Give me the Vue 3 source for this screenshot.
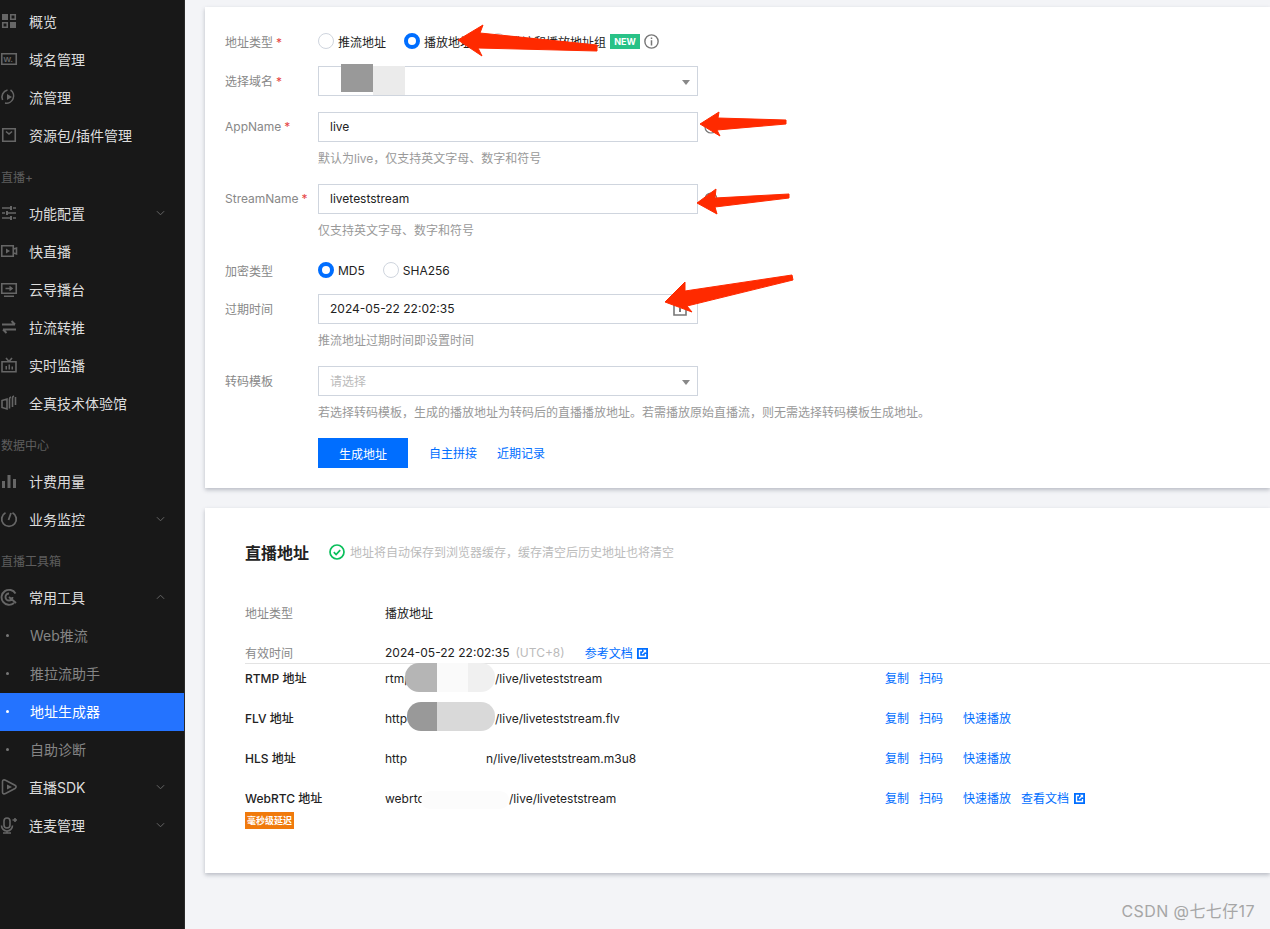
<template>
  <div class="page">
    <aside class="sidebar">
      <template v-for="m in menu" :key="m.label">
        <div v-if="m.section" class="section">{{ m.label }}</div>
        <div v-else-if="m.sub" class="sub" :class="{ active: m.active }">
          <i class="dot"></i>{{ m.label }}
        </div>
        <div v-else class="item">
          <svg class="icon" viewBox="0 0 18 18">
            <path v-if="icons[m.icon].s" :d="icons[m.icon].s" fill="none" stroke="#666" :stroke-width="icons[m.icon].w || 1.6" />
            <path v-if="icons[m.icon].f" :d="icons[m.icon].f" fill="#666" />
            <text v-if="icons[m.icon].t" x="3.4" y="12" class="icon-text">{{ icons[m.icon].t }}</text>
          </svg>
          <span>{{ m.label }}</span>
          <svg v-if="m.arrow" class="chev" viewBox="0 0 10 6">
            <path :d="m.arrow === 'up' ? 'M1 5l4-4 4 4' : 'M1 1l4 4 4-4'" fill="none" stroke="#666" stroke-width="1.1" />
          </svg>
        </div>
      </template>
    </aside>

    <main class="main">
      <section class="card form-card">
        <div class="row row-type">
          <label class="label">地址类型<em>*</em></label>
          <div class="radios">
            <span class="radio"><i class="circle"></i>推流地址</span>
            <span class="radio"><i class="circle on"></i>播放地址</span>
            <span class="radio"><i class="circle"></i>推流和播放地址组</span>
            <span class="new">NEW</span>
            <svg class="info" viewBox="0 0 14 14">
              <circle cx="7" cy="7" r="6.200" fill="none" stroke="#777" stroke-width="1.300" />
              <path d="M6.300 3.200h1.400v1.400H6.300zM6.300 5.800h1.400v5H6.300z" fill="#777" />
            </svg>
          </div>
        </div>

        <div class="row">
          <label class="label">选择域名<em>*</em></label>
          <div class="field select">
            <span class="redact-a"></span>
            <span class="redact-b"></span>
            <i class="caret"></i>
          </div>
        </div>

        <div class="row">
          <label class="label">AppName<em>*</em></label>
          <div class="field-wrap">
            <div class="field">live</div>
            <svg class="help" viewBox="0 0 14 14"><circle cx="7" cy="7" r="6" fill="none" stroke="#777" stroke-width="1.200" /></svg>
          </div>
        </div>
        <p class="hint">默认为live，仅支持英文字母、数字和符号</p>

        <div class="row">
          <label class="label">StreamName<em>*</em></label>
          <div class="field-wrap">
            <div class="field">liveteststream</div>
            <svg class="help" viewBox="0 0 14 14"><circle cx="7" cy="7" r="6" fill="none" stroke="#777" stroke-width="1.200" /></svg>
          </div>
        </div>
        <p class="hint">仅支持英文字母、数字和符号</p>

        <div class="row row-enc">
          <label class="label">加密类型</label>
          <div class="radios">
            <span class="radio"><i class="circle on"></i>MD5</span>
            <span class="radio"><i class="circle"></i>SHA256</span>
          </div>
        </div>

        <div class="row">
          <label class="label">过期时间</label>
          <div class="field date">
            2024-05-22 22:02:35
            <svg class="calendar" viewBox="0 0 14 14">
              <path d="M1 2.500h12v10.500H1z" fill="none" stroke="#777" stroke-width="1.600" />
              <path d="M6 6h2v4H6z" fill="#777" />
            </svg>
          </div>
        </div>
        <p class="hint">推流地址过期时间即设置时间</p>

        <div class="row">
          <label class="label">转码模板</label>
          <div class="field select placeholder">请选择<i class="caret"></i></div>
        </div>
        <p class="hint">若选择转码模板，生成的播放地址为转码后的直播播放地址。若需播放原始直播流，则无需选择转码模板生成地址。</p>

        <div class="actions">
          <button class="primary">生成地址</button>
          <a class="link">自主拼接</a>
          <a class="link">近期记录</a>
        </div>
      </section>

      <section class="card result-card">
        <div class="title-row">
          <h2>直播地址</h2>
          <svg class="ok" viewBox="0 0 16 16">
            <circle cx="8" cy="8" r="7" fill="none" stroke="#0abf5b" stroke-width="1.700" />
            <path d="M4.800 8.200l2.300 2.300 4.100-4.300" fill="none" stroke="#0abf5b" stroke-width="1.700" />
          </svg>
          <span class="note">地址将自动保存到浏览器缓存，缓存清空后历史地址也将清空</span>
        </div>

        <div class="info-row">
          <span class="info-label">地址类型</span>
          <span>播放地址</span>
        </div>
        <div class="info-row last">
          <span class="info-label">有效时间</span>
          <span>2024-05-22 22:02:35</span>
          <span class="utc">(UTC+8)</span>
          <a class="link doc">参考文档<svg class="ext" viewBox="0 0 12 12"><use href="#ext-icon" /></svg></a>
        </div>

        <div v-for="r in rows" :key="r.name" class="url-row">
          <div class="url-name">
            {{ r.name }}
            <span v-if="r.badge" class="badge">{{ r.badge }}</span>
          </div>
          <div class="url-value">
            <span class="head" :class="r.key">{{ r.head }}</span>
            <span class="mask" :class="r.key"></span>
            <span>{{ r.tail }}</span>
          </div>
          <div class="ops">
            <a class="link">复制</a>
            <a class="link">扫码</a>
            <a v-if="r.play" class="link play">快速播放</a>
            <a v-if="r.doc" class="link">查看文档<svg class="ext" viewBox="0 0 12 12"><use href="#ext-icon" /></svg></a>
          </div>
        </div>
      </section>
    </main>

    <!-- red annotation arrows drawn on top of the screenshot -->
    <svg class="arrows" viewBox="0 0 1270 929">
      <defs>
        <g id="ext-icon">
          <path d="M0 0h12v12H0z" fill="#006eff" />
          <path d="M2 2h3.500v1.500H3.500v5h5V6.500H10V10H2zM6.500 2H10v3.500L8.800 4.300 6 7 5 6l2.700-2.800z" fill="#fff" />
        </g>
      </defs>
      <path v-for="(a, i) in arrows" :key="i" :d="a" fill="#ff2a00" stroke="#ff2a00" stroke-width="1" stroke-linejoin="round" />
    </svg>

    <div class="watermark">CSDN @七七仔17</div>
  </div>
</template>

<script setup>
const icons = {
  grid: { s: 'M10.750 2.750h4.500v4.500h-4.500z M2.750 10.750h4.500v4.500h-4.500z', f: 'M2 2h6v6H2z M10 10h6v6h-6z' },
  domain: { s: 'M1.750 3.750h14.500v10.500H1.750z', t: 'W.' },
  stream: { s: 'M10.500 2A7.200 7.200 0 0 1 5 15 M2.600 12A7.200 7.200 0 0 1 7.500 2', f: 'M7 6l5 3-5 3z' },
  box: { s: 'M2.750 2.750h12.500v12.500H2.750z M6 5.500l3 2.500 3-2.500' },
  sliders: { s: 'M2 4h8M13 4h3 M2 9h3M8 9h8 M2 14h8M13 14h3', f: 'M10 2h2v4h-2z M6 7h2v4H6z M10 12h2v4h-2z' },
  camera: { s: 'M1.750 3.750h11.500v10.500H1.750z M13.500 7l3-1v6l-3-1', f: 'M6 6.500l4 2.500-4 2.500z' },
  monitor: { s: 'M1.750 3.750h14.500v9.500H1.750z M4 16.250h10 M5.500 8.500h6 M9.500 6.500l2.500 2-2.500 2' },
  swap: { s: 'M2 6.500h13 M11.500 3L15 6.500 M16 11.500H3 M6.500 15L3 11.500', w: 2 },
  tv: { s: 'M2 5.750h14v10H2z M6 2l3 3.500L12 2', f: 'M5.500 10H7v3.500H5.500z M8.500 8.500H10v5H8.500z M11.500 10.500H13v3h-1.500z' },
  layers: { s: 'M2 6.500l5-1.500v10l-5-1.500z M9.500 14.500V5q0-1.500 1.500-2 M12.500 13V4q0-1.500 1.500-2 M15.500 11V3' },
  bars: { f: 'M2 9h3v7H2z M7.500 3h3v13h-3z M13 7h3v9h-3z' },
  gauge: { s: 'M5.500 2.700A7.300 7.300 0 1 0 12.500 2.700 M11 3L8.500 10', w: 1.800 },
  tools: { s: 'M15.500 5.500A7.500 7.500 0 1 0 14 15 M12.500 9a3.500 3.500 0 1 1-3.500-3.500 M9 9l7 6', w: 1.900 },
  sdk: { s: 'M2.500 3.500c0-1.500 1.500-2 3-1.300l9.500 5c1.500.9 1.500 2.400 0 3.300l-9.500 5c-1.500.8-3 .2-3-1.300z', f: 'M7 6.500l5 2.500-5 2.500z' },
  mic: { s: 'M7 2a3 3 0 0 1 3 3v4a3 3 0 0 1-6 0V5a3 3 0 0 1 3-3 M1.500 9.500a5.500 5.500 0 0 0 11 0 M7 15v2 M3 17h8 M12.500 4h4.500 M15 2v4' }
};

const menu = [
  { label: '概览', icon: 'grid' },
  { label: '域名管理', icon: 'domain' },
  { label: '流管理', icon: 'stream' },
  { label: '资源包/插件管理', icon: 'box' },
  { label: '直播+', section: true },
  { label: '功能配置', icon: 'sliders', arrow: 'down' },
  { label: '快直播', icon: 'camera' },
  { label: '云导播台', icon: 'monitor' },
  { label: '拉流转推', icon: 'swap' },
  { label: '实时监播', icon: 'tv' },
  { label: '全真技术体验馆', icon: 'layers' },
  { label: '数据中心', section: true },
  { label: '计费用量', icon: 'bars' },
  { label: '业务监控', icon: 'gauge', arrow: 'down' },
  { label: '直播工具箱', section: true },
  { label: '常用工具', icon: 'tools', arrow: 'up' },
  { label: 'Web推流', sub: true },
  { label: '推拉流助手', sub: true },
  { label: '地址生成器', sub: true, active: true },
  { label: '自助诊断', sub: true },
  { label: '直播SDK', icon: 'sdk', arrow: 'down' },
  { label: '连麦管理', icon: 'mic', arrow: 'down' }
];

const rows = [
  { key: 'rtmp', name: 'RTMP 地址', head: 'rtmp', tail: '/live/liveteststream' },
  { key: 'flv', name: 'FLV 地址', head: 'http', tail: '/live/liveteststream.flv', play: true },
  { key: 'hls', name: 'HLS 地址', head: 'http', tail: 'n/live/liveteststream.m3u8', play: true },
  { key: 'webrtc', name: 'WebRTC 地址', head: 'webrtc', tail: '/live/liveteststream', play: true, doc: true, badge: '毫秒级延迟' }
];

const arrows = [
  'M458 40L483 25L480 33L597 45L597 51L478 48L482 56Z',
  'M700 124L719 112L718 118L786 120L786 124L717 130L720 136Z',
  'M697 203L716 189L715 198L789 194L789 198L715 207L717 214Z',
  'M665 302L685 282L685 291L792 275L793 280L687 306L692 312Z'
];
</script>

<style>
body {
  background: #f3f4f7;
}
</style>

<style scoped>
.page {
  display: flex;
  position: relative;
  height: 929px;
  overflow: hidden;
  background: #f3f4f7;
  font-family: Inter, "Noto Sans CJK SC", sans-serif;
  font-size: 12px;
  color: #222;
}

.sidebar {
  flex: none;
  width: 185px;
  padding-top: 3px;
  box-sizing: border-box;
  background: #181818;
  border-right: 1px solid #2a2a2a;
}

.item,
.sub {
  display: flex;
  align-items: center;
  height: 38px;
  box-sizing: border-box;
  padding-bottom: 2px;
  font-size: 14px;
  color: #ddd;
}

.icon {
  flex: none;
  width: 18px;
  height: 18px;
  margin-right: 11px;
}

.icon-text {
  font: bold 8px "Liberation Sans", sans-serif;
  fill: #666;
}

.chev {
  width: 9px;
  height: 6px;
  margin-left: auto;
  margin-right: 19px;
}

.section {
  display: flex;
  align-items: flex-end;
  height: 40px;
  padding-left: 1px;
  padding-bottom: 10px;
  box-sizing: border-box;
  color: #5e5e5e;
  font-size: 12px;
}

.sub {
  color: #858585;
}

.sub.active {
  background: #2473ff;
  color: #fff;
}

.dot {
  flex: none;
  width: 3px;
  height: 3px;
  margin: 0 21px 0 6px;
  border-radius: 50%;
  background: #777;
}

.active .dot {
  background: #fff;
}

.main {
  flex: 1;
  min-width: 0;
  padding: 7px 0 0 20px;
}

.card {
  background: #fff;
  box-shadow: 0 2px 4px rgba(54, 58, 80, 0.3);
}

.form-card {
  padding: 20px 20px 20px;
  height: 481px;
  box-sizing: border-box;
}

.row {
  display: flex;
  align-items: center;
  min-height: 30px;
  margin-bottom: 16px;
}

.row:has(+ .hint) {
  margin-bottom: 0;
}

.row-type {
  height: 28px;
  min-height: 28px;
  margin-bottom: 11px;
}

.row-enc {
  height: 28px;
  min-height: 28px;
  margin-bottom: 10px;
}

.label {
  flex: none;
  width: 93px;
  padding-bottom: 2px;
  color: #888;
}

.row-type .label,
.row-enc .label {
  padding-bottom: 0;
}

.label em {
  margin-left: 3px;
  color: #e54545;
  font-style: normal;
}

.radios {
  display: flex;
  align-items: center;
  gap: 18px;
}

.radio {
  display: flex;
  align-items: center;
  gap: 4px;
}

.circle {
  width: 16px;
  height: 16px;
  box-sizing: border-box;
  border: 1px solid #cfd5de;
  border-radius: 50%;
}

.circle.on {
  border: 4px solid #006eff;
}

.new {
  margin-left: -14px;
  width: 30px;
  height: 15px;
  line-height: 15px;
  text-align: center;
  background: #29c287;
  color: #fff;
  font-size: 9px;
  font-weight: 700;
}

.info {
  width: 15px;
  height: 15px;
  margin-left: -14px;
}

.field-wrap {
  position: relative;
}

.help {
  position: absolute;
  left: 386px;
  top: 8px;
  width: 14px;
  height: 14px;
}

.field {
  position: relative;
  display: flex;
  align-items: center;
  width: 380px;
  height: 30px;
  box-sizing: border-box;
  padding-left: 11px;
  padding-bottom: 2px;
  border: 1px solid #cfd5de;
  background: #fff;
}

.placeholder {
  color: #bbb;
}

.caret {
  position: absolute;
  right: 7px;
  top: 13px;
  border-left: 4.5px solid transparent;
  border-right: 4.5px solid transparent;
  border-top: 5px solid #888;
}

.calendar {
  position: absolute;
  right: 10px;
  top: 7px;
  width: 14px;
  height: 14px;
}

.redact-a,
.redact-b {
  position: absolute;
  left: 22px;
  top: -3px;
  width: 32px;
  height: 28px;
  background: #999;
}

.redact-b {
  left: 54px;
  top: -1px;
  height: 29px;
  background: #ebebeb;
}

.hint {
  height: 20px;
  line-height: 20px;
  margin: 7px 0 15px 93px;
  color: #999;
}

.actions {
  display: flex;
  align-items: center;
  gap: 20px;
  margin-left: 93px;
}

.primary {
  width: 90px;
  height: 30px;
  border: 0;
  background: #006eff;
  color: #fff;
  font: inherit;
}

.link {
  color: #006eff;
}

.actions .link {
  padding-bottom: 2px;
}

.actions .primary + .link {
  margin-left: 1px;
}

.result-card {
  height: 365px;
  box-sizing: border-box;
  margin-top: 20px;
  padding: 33px 0 0 40px;
}

.title-row {
  display: flex;
  align-items: center;
  height: 24px;
  box-sizing: border-box;
  padding-bottom: 2px;
  margin-bottom: 38px;
}

h2 {
  margin: 0 20px 0 0;
  font-size: 16px;
  font-weight: 700;
  color: #222;
}

.ok {
  width: 16px;
  height: 16px;
  margin-right: 5px;
}

.note {
  padding-bottom: 2px;
  color: #bbb;
}

.info-row {
  display: flex;
  align-items: center;
  height: 20px;
  box-sizing: border-box;
  padding-bottom: 2px;
  margin-bottom: 20px;
}

.info-row.last {
  height: 21px;
  margin-bottom: 0;
  border-bottom: 1px solid #e3e3e3;
}

.info-label {
  width: 140px;
  color: #888;
}

.utc {
  margin-left: 6px;
  color: #bbb;
}

.doc {
  margin-left: 20px;
}

.doc .ext {
  margin-left: 4px;
}

.ext {
  width: 11px;
  height: 11px;
  margin-left: 5px;
  vertical-align: -1px;
}

.url-row {
  display: flex;
  min-height: 40px;
  box-sizing: border-box;
  padding-top: 5px;
  line-height: 20px;
}

.url-name {
  flex: none;
  width: 140px;
  font-weight: 500;
}

.badge {
  display: block;
  width: 49px;
  height: 17px;
  line-height: 17px;
  margin-top: 3px;
  text-align: center;
  background: #f07a0c;
  color: #fff;
  font-size: 9px;
  font-weight: 700;
}

.url-value {
  flex: none;
  display: flex;
  width: 500px;
  height: 20px;
}

.head {
  white-space: nowrap;
}

.mask {
  flex: none;
  position: relative;
  border-radius: 14px;
}

.head.rtmp { width: 20px; }
.head.flv { width: 22px; }
.head.hls { width: 25px; }
.head.webrtc { width: 36px; }

.mask.rtmp {
  width: 90px;
  height: 29px;
  margin-top: -6px;
  background: linear-gradient(90deg, #b5b5b5 0 32px, #fafafa 32px 63px, #f0f0f0 63px);
}

.mask.flv {
  width: 88px;
  height: 29px;
  margin-top: -7px;
  background: linear-gradient(90deg, #999 0 30px, #d9d9d9 30px);
}

.mask.hls {
  width: 76px;
}

.mask.webrtc {
  width: 88px;
  height: 18px;
  margin-top: 2px;
  background: #fcfcfc;
}

.ops {
  display: flex;
  gap: 10px;
}

.play {
  margin-left: 10px;
}

.arrows {
  position: absolute;
  left: 0;
  top: 0;
  width: 1270px;
  height: 929px;
  pointer-events: none;
}

.watermark {
  position: absolute;
  right: 15px;
  bottom: 7px;
  font-size: 16px;
  letter-spacing: 0.4px;
  color: #a6a6a6;
}
</style>
